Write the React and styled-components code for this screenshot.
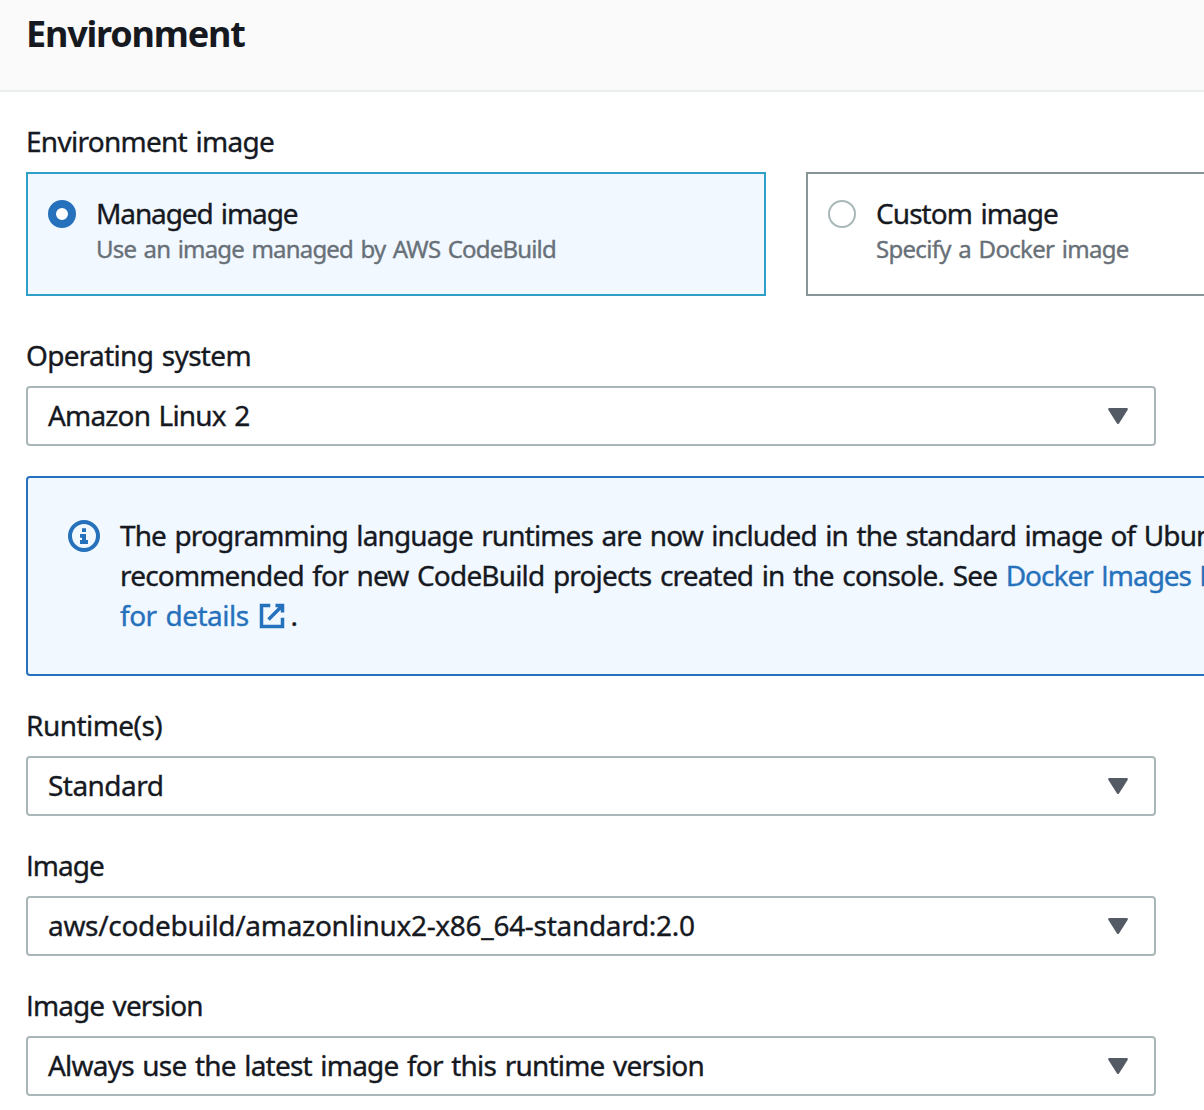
import React from "react";
import styled, { createGlobalStyle, css } from "styled-components";

const GlobalStyle = createGlobalStyle`
  * { box-sizing: border-box; }
  body {
    margin: 0;
    background: #fff;
    color: #16191f;
    font-family: "Noto Sans", "Open Sans", sans-serif;
    font-size: 28px;
    line-height: 38px;
    word-spacing: 2px;
    -webkit-text-stroke: 0.35px currentColor;
    overflow: hidden;
  }
`;

/* Uses the plain, serif-less capital "I" at the start of a text. */
const plainCapital = css`
  &::first-letter { font-family: "Open Sans", sans-serif; }
`;

const Page = styled.div`
  width: 1204px;
  height: 1110px;
  overflow: hidden;
`;

const Header = styled.header`
  height: 92px;
  padding: 10px 26px 0;
  background: #fafafa;
  border-bottom: 2px solid #eaeded;
`;

const Title = styled.h2`
  margin: 0;
  font-size: 36px;
  line-height: 48px;
  font-weight: 700;
  letter-spacing: -1.2px;
  -webkit-text-stroke: 0;
`;

const Form = styled.form`
  display: flex;
  flex-direction: column;
  gap: 30px;
  padding: 30px 26px 0;
`;

const Field = styled.div`
  display: flex;
  flex-direction: column;
  gap: 10px;
  margin-bottom: ${(p) => p.$after || 0}px;
`;

const Label = styled.div`
  height: 40px;
  white-space: nowrap;
  letter-spacing: ${(p) => p.$tracking}px;
  ${(p) => p.$plain && plainCapital}
`;

const Tiles = styled.div`
  display: flex;
  gap: 40px;
`;

const Tile = styled.label`
  display: flex;
  flex: none;
  gap: 20px;
  width: 740px;
  height: 124px;
  padding: 20px;
  border: 2px solid ${(p) => (p.$selected ? "#2ea0c8" : "#879596")};
  background: ${(p) => (p.$selected ? "#f1f8ff" : "#fff")};
`;

const Radio = styled.span`
  flex: none;
  width: 28px;
  height: 28px;
  margin-top: 6px;
  border-radius: 50%;
  background: #fff;
  border: ${(p) => (p.$selected ? "8px solid #2671bc" : "2px solid #aab7b8")};
`;

const TileTitle = styled.div`
  white-space: nowrap;
  letter-spacing: ${(p) => p.$tracking}px;
`;

const TileText = styled.div`
  color: #687078;
  font-size: 24px;
  line-height: 33px;
  white-space: nowrap;
  letter-spacing: ${(p) => p.$tracking}px;
`;

const SelectBox = styled.div`
  display: flex;
  align-items: center;
  justify-content: space-between;
  width: 1130px;
  height: 60px;
  padding: 0 26px 0 20px;
  border: 2px solid #aab7b8;
  border-radius: 4px;
  background: #fff;
`;

const SelectValue = styled.span`
  padding-bottom: 2px;
  white-space: nowrap;
  letter-spacing: ${(p) => p.$tracking}px;
`;

const Alert = styled.div`
  display: flex;
  gap: 20px;
  width: 1500px;
  height: 200px;
  padding: 37px 40px;
  border: 2px solid #2671bc;
  border-radius: 4px;
  background: #f1f8ff;
`;

const AlertIcon = styled.svg`
  flex: none;
  width: 32px;
  height: 32px;
  margin-top: 5px;
`;

const AlertText = styled.div`
  line-height: 40px;
`;

const Line = styled.div`
  height: 40px;
  white-space: nowrap;
  letter-spacing: ${(p) => p.$tracking}px;
`;

const Link = styled.a`
  color: #2671bc;
  letter-spacing: ${(p) => p.$tracking}px;
`;

const PlainWord = styled.span`
  display: inline-block;
  ${plainCapital}
`;

const ExternalIcon = styled.svg`
  width: 28px;
  height: 28px;
  margin: 0 5px 0 9px;
  vertical-align: -4px;
`;

function Select({ label, value, labelTracking, valueTracking, plain }) {
  return (
    <Field>
      <Label $tracking={labelTracking} $plain={plain}>{label}</Label>
      <SelectBox>
        <SelectValue $tracking={valueTracking}>{value}</SelectValue>
        <svg width="20" height="16" viewBox="0 0 20 16">
          <path
            d="M1.3 1.2h17.4L10 14.8z"
            fill="#545b64"
            stroke="#545b64"
            strokeWidth="2.4"
            strokeLinejoin="round"
          />
        </svg>
      </SelectBox>
    </Field>
  );
}

function ImageTile({ title, text, selected, titleTracking, textTracking }) {
  return (
    <Tile $selected={selected}>
      <Radio $selected={selected} />
      <div>
        <TileTitle $tracking={titleTracking}>{title}</TileTitle>
        <TileText $tracking={textTracking}>{text}</TileText>
      </div>
    </Tile>
  );
}

export default function App() {
  return (
    <Page>
      <GlobalStyle />
      <Header>
        <Title>Environment</Title>
      </Header>
      <Form>
        <Field $after={10}>
          <Label $tracking={-0.73}>Environment image</Label>
          <Tiles>
            <ImageTile
              selected
              title="Managed image"
              text="Use an image managed by AWS CodeBuild"
              titleTracking={-1.1}
              textTracking={-0.81}
            />
            <ImageTile
              title="Custom image"
              text="Specify a Docker image"
              titleTracking={-0.93}
              textTracking={-0.7}
            />
          </Tiles>
        </Field>
        <Select
          label="Operating system"
          value="Amazon Linux 2"
          labelTracking={-0.69}
          valueTracking={-0.84}
        />
        <Alert>
          <AlertIcon viewBox="0 0 32 32">
            <circle cx="16" cy="16" r="14" fill="none" stroke="#2671bc" strokeWidth="4" />
            <path d="M14 8.3h4V12h-4zM12 14h6v6h2v4h-8v-4h2v-2.3h-2z" fill="#2671bc" />
          </AlertIcon>
          <AlertText>
            <Line $tracking={-0.88}>
              The programming language runtimes are now included in the standard image of Ubuntu
            </Line>
            <Line $tracking={-0.82}>
              recommended for new CodeBuild projects created in the console. See{" "}
              <Link $tracking={-1.02}>
                Docker <PlainWord>Images</PlainWord> Provided
              </Link>
            </Line>
            <Line $tracking={0}>
              <Link $tracking={-0.5}>for details</Link>
              <ExternalIcon viewBox="0 0 16 16" fill="none" stroke="#2671bc" strokeWidth="2">
                <path d="M10 2h4v4M6 10l8-8M14 9.05V14H2V2h5" />
              </ExternalIcon>
              .
            </Line>
          </AlertText>
        </Alert>
        <Select label="Runtime(s)" value="Standard" labelTracking={-0.54} valueTracking={-0.54} />
        <Select
          plain
          label="Image"
          value="aws/codebuild/amazonlinux2-x86_64-standard:2.0"
          labelTracking={-1}
          valueTracking={-0.3}
        />
        <Select
          plain
          label="Image version"
          value="Always use the latest image for this runtime version"
          labelTracking={-0.9}
          valueTracking={-0.79}
        />
      </Form>
    </Page>
  );
}
